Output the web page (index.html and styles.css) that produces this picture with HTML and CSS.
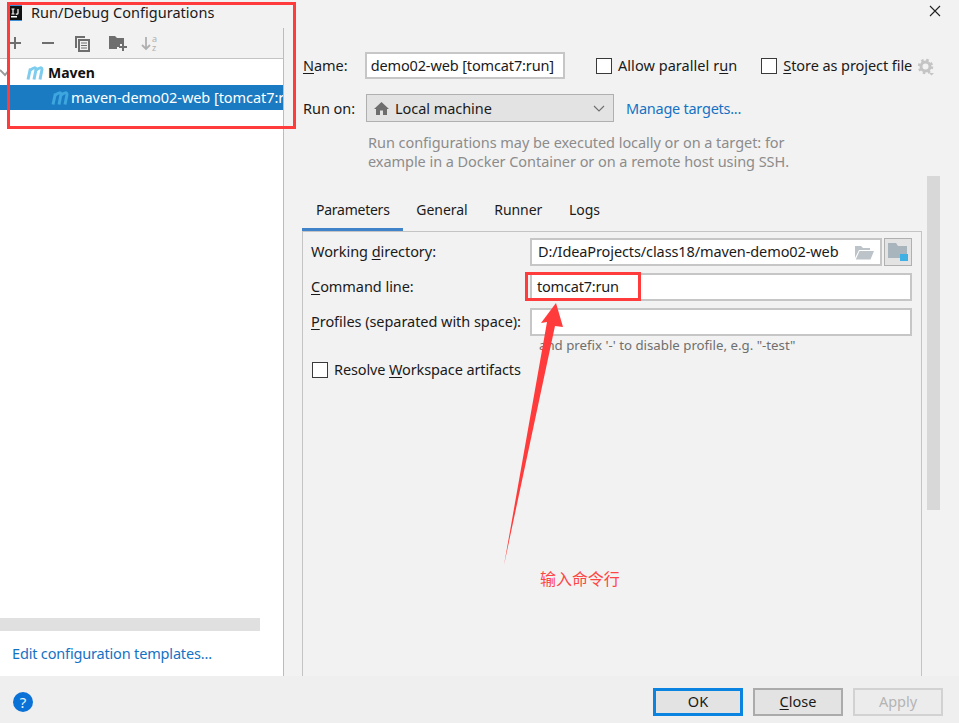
FILE: index.html
```html
<!DOCTYPE html>
<html lang="en">
<head>
<meta charset="utf-8">
<title>Run/Debug Configurations</title>
<link rel="stylesheet" href="styles.css">
</head>
<body>
<div class="app">
  <header class="titlebar">
    <svg class="app-icon" width="14" height="16" viewBox="0 0 14 16"><rect x="0" y="0" width="14" height="16" fill="#3d8fd6"/><rect x="1" y="1" width="13" height="14" fill="#111"/><rect x="3" y="11" width="6" height="1.5" fill="#fff"/><path d="M3.500 4h3M5 4v5M3.500 9h3M10 4v4.200q0 1-1.200 1h-1" fill="none" stroke="#fff" stroke-width="1.200"/></svg>
    <span class="title">Run/Debug Configurations</span>
    <svg class="close" width="12" height="12" viewBox="0 0 12 12"><path d="M1 1l10 10M11 1L1 11" stroke="#222" stroke-width="1.100" fill="none"/></svg>
  </header>
  <main class="main">
    <aside class="left">
      <div class="toolbar">
        <svg class="tool tool-add" width="14" height="14" viewBox="0 0 14 14"><path d="M1 7h12M7 1v12" stroke="#6e6e6e" stroke-width="2"/></svg>
        <svg class="tool tool-remove" width="14" height="14" viewBox="0 0 14 14"><path d="M1 7h12" stroke="#6e6e6e" stroke-width="2"/></svg>
        <svg class="tool tool-copy" width="16" height="17" viewBox="0 0 16 17"><path d="M1 1h10v2H3v10H1z" fill="#6e6e6e"/><path d="M4 4h12v13H4z" fill="#6e6e6e"/><path d="M6 6h8v9H6z" fill="#f2f2f2"/><path d="M7 8h6M7 10.500h6M7 13h6" stroke="#6e6e6e" stroke-width="1.200"/></svg>
        <svg class="tool tool-folder" width="18" height="16" viewBox="0 0 18 16"><path d="M0 1h6l2 2h7v6h-4v3H8v2H0z" fill="#6e6e6e"/><path d="M10 12h8M14 8.500v7.500" stroke="#6e6e6e" stroke-width="2"/></svg>
        <svg class="tool tool-sort" width="18" height="18" viewBox="0 0 18 18"><path d="M5 3v12M1 11l4 4 4-4" stroke="#b0b0b0" stroke-width="1.800" fill="none"/><text x="11" y="7.500" class="sort-a">a</text><text x="11" y="17" class="sort-a">z</text></svg>
      </div>
      <div class="tree">
        <div class="tree-row tree-group">
          <svg class="chevron" width="10" height="8" viewBox="0 0 10 8"><path d="M0 1l5 5 4-5" stroke="#9a9a9a" stroke-width="1.900" fill="none"/></svg>
          <svg class="maven-icon" width="18" height="14" viewBox="0 0 18 14"><path d="M2 13.500L4.400 2.500M4.400 4Q9.500 0 10 3.500L8 13.500M10.200 4Q15.500 0 16 3.500L14 13.500" stroke="#7ecdee" stroke-width="3" fill="none"/></svg>
          <span class="group-label">Maven</span>
        </div>
        <div class="tree-row tree-selected">
          <svg class="maven-icon" width="18" height="14" viewBox="0 0 18 14"><path d="M2 13.500L4.400 2.500M4.400 4Q9.500 0 10 3.500L8 13.500M10.200 4Q15.500 0 16 3.500L14 13.500" stroke="#3da6de" stroke-width="3" fill="none"/></svg>
          <span class="selected-label">maven-demo02-web [tomcat7:run]</span>
        </div>
      </div>
      <div class="hscroll"></div>
      <div class="templates"><a class="link">Edit configuration templates...</a></div>
    </aside>
    <section class="right">
      <div class="config">
        <div class="name-row">
          <label class="row-label"><u>N</u>ame:</label>
          <div class="field name-field"><span class="name-text">demo02-web [tomcat7:run]</span></div>
          <span class="check check-parallel"></span><span class="check-text">Allow parallel r<u>u</u>n</span>
          <span class="check check-store"></span><span class="check-text store-text"><u>S</u>tore as project file</span>
          <svg class="gear" width="18" height="18" viewBox="0 0 18 18"><circle cx="8.500" cy="8.500" r="4.500" fill="none" stroke="#c4c4c4" stroke-width="3"/><circle cx="8.500" cy="8.500" r="6.500" fill="none" stroke="#c4c4c4" stroke-width="2.400" stroke-dasharray="2.500 2.600"/><path d="M12 15h5l-2.500 2.500z" fill="#c4c4c4"/></svg>
        </div>
        <div class="run-row">
          <label class="row-label run-label">Run on:</label>
          <div class="select">
            <svg class="home" width="15" height="13" viewBox="0 0 15 13"><path d="M7.500 0L15 7h-2v6H9V8.500H6V13H2V7H0z" fill="#6e6e6e"/></svg>
            <span class="select-value">Local machine</span>
            <svg class="select-arrow" width="12" height="7" viewBox="0 0 12 7"><path d="M1 1l5 5 5-5" stroke="#6e6e6e" stroke-width="1.100" fill="none"/></svg>
          </div>
          <a class="link manage">Manage targets...</a>
        </div>
        <p class="desc">Run configurations may be executed locally or on a target: for<br>example in a Docker Container or on a remote host using SSH.</p>
        <nav class="tabs">
          <span class="tab tab-active">Parameters</span>
          <span class="tab">General</span>
          <span class="tab">Runner</span>
          <span class="tab">Logs</span>
        </nav>
        <div class="panel">
          <div class="form-row">
            <label class="form-label">Working <u>d</u>irectory:</label>
            <div class="field dir-field">
              <span class="dir-text">D:/IdeaProjects/class18/maven-demo02-web</span>
              <svg class="open-folder" width="19" height="15" viewBox="0 0 19 15"><path d="M0 1h6l2 2h7v2H4L0 13z" fill="#bcc4c9"/><path d="M4.500 6H19l-3.500 8.500H0.800z" fill="#bcc4c9"/></svg>
            </div>
            <div class="browse">
              <svg width="22" height="22" viewBox="0 0 22 22"><path d="M1 2h8l2 3h9v9H1z" fill="#a9b5bd"/><path d="M1 5h19v12H1z" fill="#a9b5bd"/><rect x="13" y="13" width="8" height="7" fill="#3fb0e3"/></svg>
            </div>
          </div>
          <div class="form-row">
            <label class="form-label"><u>C</u>ommand line:</label>
            <div class="field wide-field"><span class="cmd-text">tomcat7:run</span></div>
          </div>
          <div class="form-row">
            <label class="form-label"><u>P</u>rofiles (separated with space):</label>
            <div class="field wide-field"></div>
          </div>
          <p class="hint">and prefix '-' to disable profile, e.g. "-test"</p>
          <div class="resolve">
            <span class="check"></span><span class="resolve-text">Resolve <u>W</u>orkspace artifacts</span>
          </div>
        </div>
      </div>
      <div class="vscroll"></div>
    </section>
  </main>
  <footer class="footer">
    <span class="help">?</span>
    <div class="buttons">
      <button class="btn btn-ok">OK</button>
      <button class="btn"><u>C</u>lose</button>
      <button class="btn btn-off">Apply</button>
    </div>
  </footer>
  <div class="mark mark-tree"></div>
  <div class="mark mark-cmd"></div>
  <svg class="arrow" width="70" height="270" viewBox="0 0 70 270"><polygon points="56,3 63,27 55,26 4,265 47,22 41,23" fill="#ff3b3b"/></svg>
  <span class="note">输入命令行</span>
</div>
</body>
</html>
```
FILE: styles.css
```css
* { box-sizing: border-box; }
html, body { margin: 0; padding: 0; }
body { background: #f2f2f2; color: #1a1a1a; font-family: "Noto Sans", "Open Sans", sans-serif; font-size: 14.5px; letter-spacing: -0.05px; }
.app { position: relative; width: 959px; height: 723px; overflow: hidden; display: flex; flex-direction: column; background: #f2f2f2; }
p { margin: 0; }
u { text-underline-offset: 2px; }

.titlebar { height: 28px; flex: none; display: flex; align-items: center; padding: 0 18px 4px 8px; }
.app-icon { flex: none; margin-top: 1px; }
.title { margin-left: 9px; letter-spacing: 0.03px; }
.close { margin-left: auto; margin-bottom: 2px; }

.main { flex: 1; display: flex; min-height: 0; }
.left { width: 284px; flex: none; border-right: 1px solid #bcbcbc; display: flex; flex-direction: column; background: #fff; }
.toolbar { height: 31px; flex: none; background: #f2f2f2; border-bottom: 1px solid #c4c4c4; display: flex; align-items: center; position: relative; }
.tool { flex: none; }
.tool-add { margin-left: 8px; }
.tool-remove { margin-left: 19px; }
.tool-copy { margin-left: 19px; }
.tool-folder { margin-left: 19px; }
.tool-sort { margin-left: 14px; overflow: visible; }
.sort-a { font: 9px "Noto Sans", sans-serif; fill: #b0b0b0; }

.tree { flex: 1; display: flex; flex-direction: column; padding-top: 1px; }
.tree-row { height: 25px; display: flex; align-items: center; flex: none; overflow: hidden; white-space: nowrap; }
.tree-group .maven-icon { margin-left: 16px; }
.group-label { font-weight: 700; font-size: 14px; margin-left: 4px; color: #111; }
.tree-selected { background: #1a7bc2; }
.tree-selected .maven-icon { margin-left: 51px; flex: none; }
.selected-label { color: #fff; margin-left: 2px; padding-bottom: 2px; }

.hscroll { width: 260px; height: 13px; flex: none; background: #e0e0e0; }
.templates { height: 45px; flex: none; display: flex; align-items: center; padding-left: 12px; padding-bottom: 1px; }
.link { color: #1472c4; letter-spacing: -0.17px; }

.right { flex: 1; display: flex; padding-left: 18px; min-width: 0; }
.config { flex: 1; min-width: 0; padding-top: 24px; display: flex; flex-direction: column; white-space: nowrap; }
.vscroll { width: 13px; height: 334px; flex: none; margin: 148px 19px 0 5px; background: #d8d8d8; }

.name-row { height: 27px; display: flex; align-items: center; flex: none; }
.row-label { width: 63px; flex: none; padding: 0 0 2px 1px; }
.field { background: #fff; border: 2px solid #c6c6c6; display: flex; align-items: center; }
.name-field { width: 200px; height: 27px; flex: none; padding: 0 9px 2px 0; justify-content: flex-end; }
.name-text { flex: none; letter-spacing: -0.13px; }
.check { width: 16px; height: 16px; flex: none; background: #fff; border: 1px solid #3a3a3a; display: inline-block; }
.check-parallel { margin-left: 31px; }
.check-store { margin-left: 24px; }
.check-text { margin-left: 6px; padding-bottom: 2px; flex: none; letter-spacing: 0.05px; }
.store-text { letter-spacing: -0.07px; }
.gear { flex: none; margin-left: 5px; margin-top: 3px; }

.run-row { height: 28px; margin-top: 15px; display: flex; align-items: center; flex: none; }
.run-row .run-label { width: 64px; padding-bottom: 1px; }
.select { width: 248px; height: 28px; flex: none; background: #e3e3e3; border: 1px solid #b0b0b0; display: flex; align-items: center; padding: 0 8px 0 7px; }
.select-value { margin-left: 6px; padding-bottom: 1px; }
.select-arrow { margin-left: auto; }
.manage { margin-left: 12px; padding-bottom: 1px; letter-spacing: -0.25px; }
.desc { margin-top: 11px; margin-left: 66px; line-height: 19px; color: #8c8c8c; }

.tabs { display: flex; height: 36px; margin-top: 25px; flex: none; align-items: stretch; font-size: 14px; }
.tab { padding: 0 13px 6px; display: flex; align-items: center; border-bottom: 4px solid transparent; }
.tab + .tab { padding-left: 13.700px; }
.tab-active { padding-left: 14px; letter-spacing: -0.25px; border-bottom-color: #4083c9; }
.panel { flex: 1; border: 1px solid #c4c4c4; border-bottom: 0; margin-top: -1px; padding: 6px 9px 0 8px; }
.form-row { display: flex; height: 28px; margin-bottom: 7px; align-items: center; }
.form-label { width: 219px; flex: none; padding-bottom: 2px; }
.dir-field { width: 352px; height: 28px; flex: none; padding: 0 0 0 6px; justify-content: space-between; }
.dir-text { padding-bottom: 2px; letter-spacing: -0.1px; }
.open-folder { margin-right: 6px; flex: none; }
.browse { width: 28px; height: 28px; margin-left: 2px; flex: none; background: #e3e3e3; border: 1px solid #b0b0b0; display: flex; align-items: center; justify-content: center; }
.wide-field { width: 382px; height: 28px; flex: none; padding-left: 5px; }
.cmd-text { padding-bottom: 3px; letter-spacing: -0.2px; }
.hint { font-size: 13.250px; line-height: 18px; margin: -7px 0 0 228px; color: #6f6f6f; letter-spacing: 0; }
.resolve { display: flex; align-items: center; margin: 7px 0 0 1px; height: 18px; }
.resolve-text { margin-left: 6px; padding-bottom: 2px; letter-spacing: -0.12px; }

.footer { height: 47px; flex: none; background: #efefef; display: flex; align-items: center; padding: 5px 16px 0 13px; }
.help { width: 20px; height: 20px; border-radius: 50%; background: #0a72d6; color: #e8f2fc; font-size: 15px; line-height: 20px; text-align: center; flex: none; }
.buttons { margin-left: auto; display: flex; gap: 10px; }
.btn { width: 90px; height: 28px; padding: 0 0 2px; background: #e3e3e3; border: 2px solid #ababab; font: inherit; color: #1a1a1a; }
.btn-ok { border: 3px solid #0a84e0; }
.btn-off { background: #ececec; border-color: #d2d2d2; color: #b4b4b4; }

.mark { position: absolute; border: 3px solid #ff3b3b; }
.mark-tree { left: 7px; top: 2px; width: 289px; height: 127px; }
.mark-cmd { left: 525px; top: 272px; width: 116px; height: 29px; }
.arrow { position: absolute; left: 500px; top: 300px; }
.note { position: absolute; left: 540px; top: 567px; font-size: 16px; line-height: 22px; color: #ff4545; font-family: "Noto Sans CJK SC", sans-serif; }
```
